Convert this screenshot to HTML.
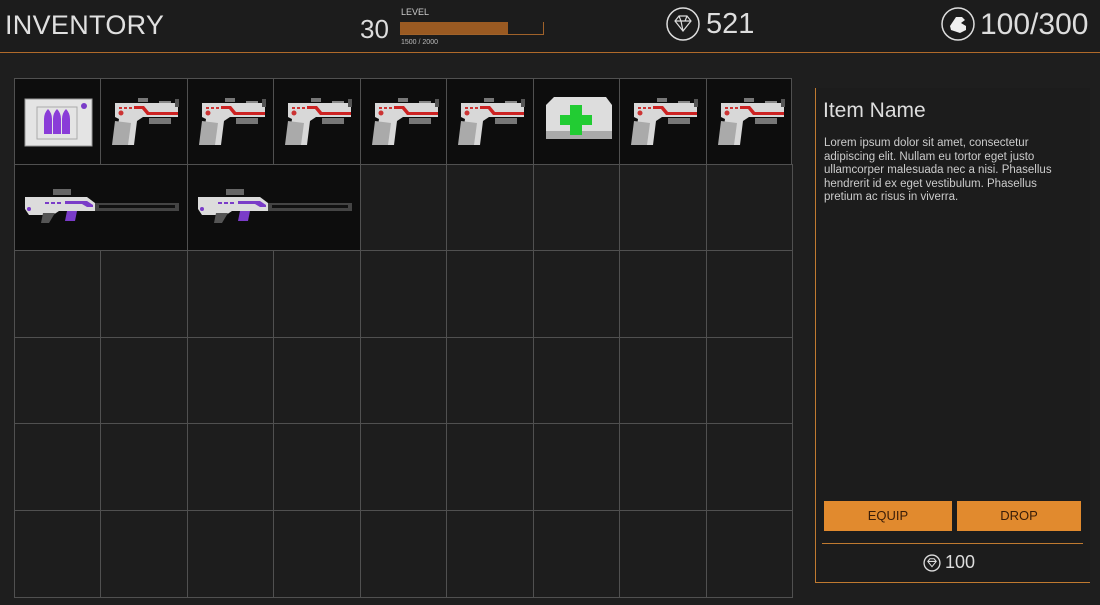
<!DOCTYPE html>
<html><head><meta charset="utf-8"><style>
*{margin:0;padding:0;box-sizing:border-box}
body{width:1100px;height:605px;background:#1e1e1e;font-family:"Liberation Sans",sans-serif;color:#ddd;position:relative;overflow:hidden}
.abs{position:absolute}
.hdr{left:0;top:0;width:1100px;height:53px;border-bottom:1px solid #b06a2a;background:#1c1c1c}
.cell{position:absolute;background:#1d1d1d;border:1px solid #505050}
.f{background:#0d0d0d}
.btn{position:absolute;top:501px;height:30px;background:#e18a2e;color:#3a1d08;font-size:13px;text-align:center;line-height:30px}
</style></head><body>
<div class="abs hdr"></div>
<div class="abs" style="left:5px;top:10px;font-size:27px;color:#e0e0e0;letter-spacing:0.3px">INVENTORY</div>
<div class="abs" style="left:360px;top:14px;font-size:26px;color:#ddd">30</div>
<div class="abs" style="left:401px;top:7px;font-size:9px;color:#ccc">LEVEL</div>
<div class="abs" style="left:400px;top:22px;width:144px;height:13px;border-right:1px solid #a0622a;border-bottom:1px solid #a0622a"></div>
<div class="abs" style="left:400px;top:22px;width:108px;height:12px;background:#9a5a22"></div>
<div class="abs" style="left:401px;top:39px;font-size:7px;color:#bbb">1500 / 2000</div>
<svg class="abs" style="left:666px;top:7px" width="34" height="34" viewBox="0 0 34 34"><circle cx="17" cy="17" r="16" fill="none" stroke="#ddd" stroke-width="1.5"/><path d="M9 14l4-5h8l4 5-8 10z M9 14h16 M13 9l2 5 2 10 M21 9l-2 5" fill="none" stroke="#ddd" stroke-width="1.2"/></svg>
<div class="abs" style="left:706px;top:8px;font-size:29px;color:#ddd">521</div>
<svg class="abs" style="left:941px;top:7px" width="34" height="34" viewBox="0 0 34 34"><circle cx="17" cy="17" r="16" fill="none" stroke="#ddd" stroke-width="1.5"/><path d="M9 19l6-9h6l3 3-4 3 5 3v4l-6 3-9-3z" fill="#eee"/></svg>
<div class="abs" style="left:980px;top:8px;font-size:30px;color:#ddd">100/300</div>

<svg width="0" height="0" style="position:absolute"><defs>
<g id="pistol">
<rect x="37" y="19" width="10" height="4" fill="#777"/><rect x="58" y="22" width="12" height="3" fill="#888"/>
<path d="M14 24h60l3 2v12H42l-6 4-3 24H14l4-26-4-2z" fill="#d8d8d8"/>
<path d="M14 42l-3 24h16l3-22z" fill="#aaa"/>
<rect x="48" y="39" width="22" height="6" fill="#777"/>
<rect x="18" y="28" width="3" height="2" fill="#c33"/><rect x="23" y="28" width="3" height="2" fill="#c33"/><rect x="28" y="28" width="3" height="2" fill="#c33"/>
<path d="M33 27h10l5 6h29v3H46l-5-6h-8z" fill="#c22"/>
<circle cx="20" cy="34" r="2.5" fill="#c33"/>
<rect x="74" y="20" width="4" height="8" fill="#555"/>
</g>
<g id="rifle">
<path d="M38 24h18v6H38z" fill="#666"/>
<path d="M10 32h62l8 6v8H44l-6 4H14l-4-6z" fill="#dcdcdc"/>
<rect x="80" y="38" width="84" height="8" fill="#444"/><rect x="84" y="40" width="76" height="3" fill="#111"/>
<path d="M30 37h4v2h-4zM36 37h4v2h-4zM42 37h4v2h-4z" fill="#7a3cc8"/>
<path d="M50 36h22l6 4v2H72l-5-3H50z" fill="#7a3cc8"/>
<path d="M52 46h10l-2 10H50z" fill="#7a3cc8"/><path d="M28 48h12l-6 10h-8z" fill="#555"/>
<circle cx="14" cy="44" r="2" fill="#7a3cc8"/>
</g>
</defs></svg>

<div class="cell f" style="left:14px;top:78px;width:87px;height:87px"><svg width="86" height="86"><rect x="10" y="20" width="67" height="47" fill="#e4e4e4" stroke="#999"/><path d="M22 28h40v32H22z" fill="none" stroke="#aaa"/><path d="M29 40q0-6 4-10q4 4 4 10v15h-8zM38 40q0-6 4-10q4 4 4 10v15h-8zM47 40q0-6 4-10q4 4 4 10v15h-8z" fill="#8a3cd8"/><circle cx="69" cy="27" r="3" fill="#7a3cc8"/></svg></div>
<div class="cell f" style="left:100px;top:78px;width:88px;height:87px"><svg width="86" height="86"><use href="#pistol"/></svg></div>
<div class="cell f" style="left:187px;top:78px;width:87px;height:87px"><svg width="86" height="86"><use href="#pistol"/></svg></div>
<div class="cell f" style="left:273px;top:78px;width:88px;height:87px"><svg width="86" height="86"><use href="#pistol"/></svg></div>
<div class="cell f" style="left:360px;top:78px;width:87px;height:87px"><svg width="86" height="86"><use href="#pistol"/></svg></div>
<div class="cell f" style="left:446px;top:78px;width:88px;height:87px"><svg width="86" height="86"><use href="#pistol"/></svg></div>
<div class="cell f" style="left:533px;top:78px;width:87px;height:87px"><svg width="86" height="86"><path d="M12 26l8-8h52l6 8v32H12z" fill="#ddd"/><rect x="12" y="52" width="66" height="8" fill="#aaa"/><path d="M36 26h12v10h10v10H48v10H36V46H26V36h10z" fill="#2c3"/></svg></div>
<div class="cell f" style="left:619px;top:78px;width:88px;height:87px"><svg width="86" height="86"><use href="#pistol"/></svg></div>
<div class="cell f" style="left:706px;top:78px;width:86px;height:87px"><svg width="86" height="86"><use href="#pistol"/></svg></div>
<div class="cell f" style="left:14px;top:164px;width:174px;height:87px"><svg width="173" height="86"><use href="#rifle"/></svg></div>
<div class="cell f" style="left:187px;top:164px;width:174px;height:87px"><svg width="173" height="86"><use href="#rifle"/></svg></div>
<div id="g"></div>
<script>
var xs=[14,100,187,273,360,446,533,619,706,792],ys=[78,164,250,337,423,510,597],h='';
for(var r=1;r<6;r++)for(var c=0;c<9;c++){if(r==1&&c<4)continue;h+='<div class="cell" style="left:'+xs[c]+'px;top:'+ys[r]+'px;width:'+(xs[c+1]-xs[c]+1)+'px;height:'+(ys[r+1]-ys[r]+1)+'px"></div>';}
document.getElementById('g').innerHTML=h;
</script>

<div class="abs" style="left:815px;top:88px;width:275px;height:495px;border-left:1px solid #c07a30;border-bottom:1px solid #c07a30;background:#1c1c1c"></div>
<div class="abs" style="left:823px;top:99px;font-size:21px;color:#ddd">Item Name</div>
<div class="abs" style="left:824px;top:137px;width:240px;font-size:11.5px;line-height:13.5px;color:#ccc">Lorem ipsum dolor sit amet, consectetur adipiscing elit. Nullam eu tortor eget justo ullamcorper malesuada nec a nisi. Phasellus hendrerit id ex eget vestibulum. Phasellus pretium ac risus in viverra.</div>
<div class="btn" style="left:824px;width:128px">EQUIP</div>
<div class="btn" style="left:957px;width:124px">DROP</div>
<div class="abs" style="left:822px;top:543px;width:261px;height:1px;background:#c07a30"></div>
<svg class="abs" style="left:923px;top:554px" width="18" height="18" viewBox="0 0 34 34"><circle cx="17" cy="17" r="15" fill="none" stroke="#ddd" stroke-width="2.5"/><path d="M9 14l4-5h8l4 5-8 10z M9 14h16" fill="none" stroke="#ddd" stroke-width="2"/></svg>
<div class="abs" style="left:945px;top:552px;font-size:18px;color:#ddd">100</div>
</body></html>
